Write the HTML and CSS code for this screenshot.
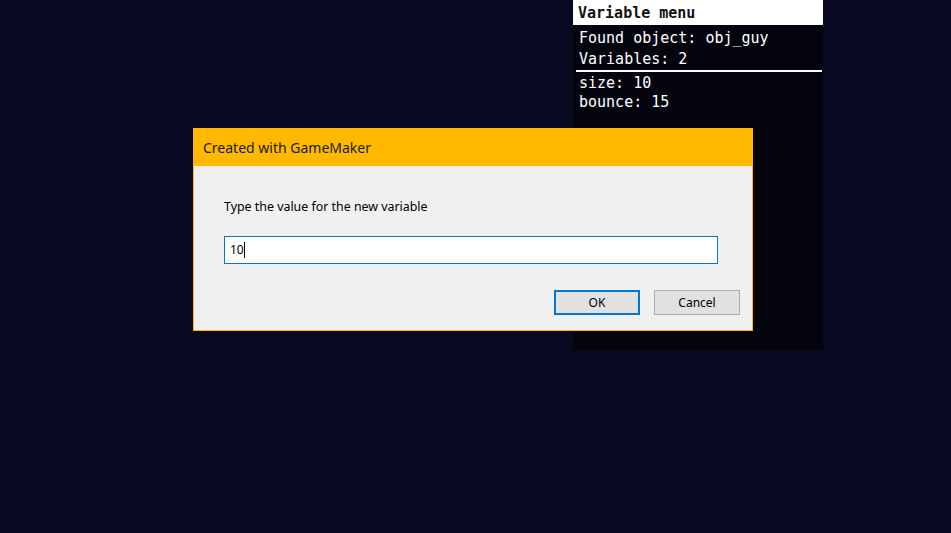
FILE: index.html
```html
<!DOCTYPE html>
<html>
<head>
<meta charset="utf-8">
<link rel="stylesheet" href="styles.css">
</head>
<body>
<div class="stage">
  <div class="panel">
    <div class="panel-head">Variable menu</div>
    <div class="panel-info">
      <div class="row">Found object: obj_guy</div>
      <div class="row">Variables: 2</div>
    </div>
    <div class="panel-sep"></div>
    <div class="panel-vars">
      <div class="row">size: 10</div>
      <div class="row">bounce: 15</div>
    </div>
  </div>

  <div class="dialog">
    <div class="dialog-title">Created with GameMaker</div>
    <div class="dialog-body">
      <div class="prompt">Type the value for the new variable</div>
      <div class="input"><span class="value">10</span><span class="caret"></span></div>
      <div class="buttons">
        <div class="btn btn-default">OK</div>
        <div class="btn">Cancel</div>
      </div>
    </div>
  </div>
</div>
</body>
</html>
```
FILE: styles.css
```css
html, body {
  margin: 0;
  padding: 0;
  background: #080920;
  width: 951px;
  height: 533px;
  overflow: hidden;
}
.stage {
  position: relative;
  width: 951px;
  height: 533px;
}
.panel {
  margin-left: 573px;
  width: 250px;
  height: 350px;
  background: #04040f;
  font-family: "DejaVu Sans Mono", monospace;
  font-size: 15px;
  color: #ffffff;
  display: flex;
  flex-direction: column;
}
.panel-head {
  background: #ffffff;
  color: #111111;
  font-weight: bold;
  height: 24px;
  line-height: 25px;
  padding-top: 1px;
  padding-left: 5px;
}
.panel-info {
  padding: 3px 0 0 6px;
}
.row {
  line-height: 21px;
}
.panel-sep {
  height: 2px;
  background: #ffffff;
  margin: 0 1px 0 3px;
}
.panel-vars {
  padding: 2px 0 0 6px;
}
.panel-vars .row {
  line-height: 19px;
}
.dialog {
  position: absolute;
  left: 193px;
  top: 128px;
  width: 558px;
  height: 201px;
  border: 1px solid #ffb900;
  background: #f0f0f0;
  display: flex;
  flex-direction: column;
  font-family: "Noto Sans", sans-serif;
  color: #000000;
}
.dialog-title {
  background: #ffb900;
  height: 37px;
  line-height: 37px;
  padding-left: 9px;
  font-size: 14px;
  color: #1a1a1a;
}
.dialog-body {
  flex: 1;
  padding: 32px 12px 0 30px;
  display: flex;
  flex-direction: column;
  font-size: 12.4px;
}
.prompt {
  line-height: 18px;
}
.input {
  margin-top: 20px;
  width: 486px;
  height: 24px;
  border: 1px solid #0078d7;
  padding: 1px 1px 1px 5px;
  background: #ffffff;
  display: flex;
  align-items: center;
  box-sizing: content-box;
  font-size: 12px;
}
.input .value {
  line-height: 16px;
}
.caret {
  width: 1px;
  height: 16px;
  background: #000000;
}
.buttons {
  margin-top: 26px;
  display: flex;
  justify-content: flex-end;
  gap: 14px;
}
.btn {
  width: 84px;
  height: 23px;
  border: 1px solid #adadad;
  background: #e1e1e1;
  display: flex;
  align-items: center;
  justify-content: center;
  font-size: 12px;
}
.btn-default {
  width: 82px;
  height: 21px;
  border: 2px solid #0078d7;
}
```
